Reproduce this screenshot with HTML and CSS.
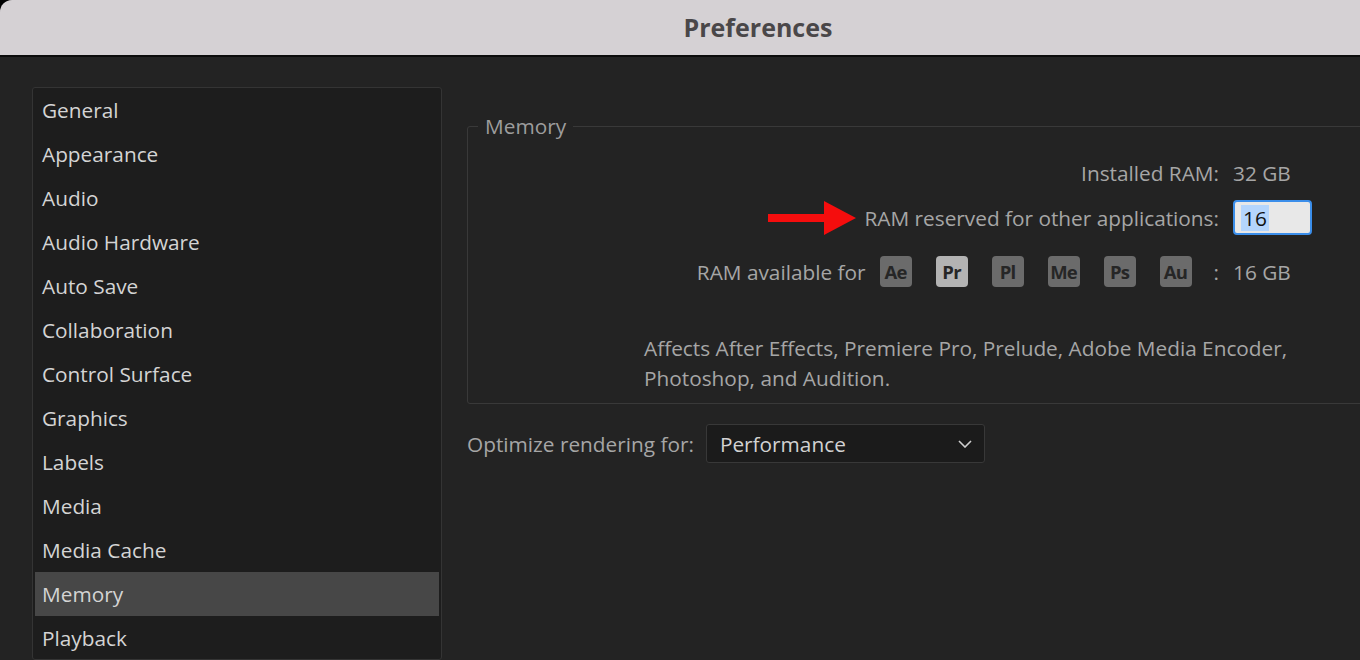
FILE: index.html
```html
<!DOCTYPE html>
<html lang="en">
<head>
    <meta charset="UTF-8">
    <title>Preferences</title>
    <link rel="stylesheet" href="styles.css">
</head>
<body>

<div class="window">
    <header class="titlebar">
        <h1>Preferences</h1>
    </header>

    <div class="main">
        <ul class="sidebar">
            <li>General</li>
            <li>Appearance</li>
            <li>Audio</li>
            <li>Audio Hardware</li>
            <li>Auto Save</li>
            <li>Collaboration</li>
            <li>Control Surface</li>
            <li>Graphics</li>
            <li>Labels</li>
            <li>Media</li>
            <li>Media Cache</li>
            <li class="active">Memory</li>
            <li>Playback</li>
        </ul>

        <div class="content">
            <fieldset class="group">
                <legend>Memory</legend>

                <div class="row">
                    <span class="label">Installed RAM:</span>
                    <span class="value">32 GB</span>
                </div>

                <div class="row">
                    <svg class="arrow" width="90" height="34" viewBox="0 0 90 34">
                        <path d="M0 13 H56 V0 L88 17 L56 34 V21 H0 Z" fill="#f50d0d"/>
                    </svg>
                    <span class="label">RAM reserved for other applications:</span>
                    <span class="value"><span class="input"><span class="selected">16</span></span></span>
                </div>

                <div class="row apps-row">
                    <span class="label">RAM available for</span>
                    <span class="apps">
                        <span class="app">Ae</span>
                        <span class="app current">Pr</span>
                        <span class="app">Pl</span>
                        <span class="app">Me</span>
                        <span class="app">Ps</span>
                        <span class="app">Au</span>
                    </span>
                    <span class="colon">:</span>
                    <span class="value">16 GB</span>
                </div>

                <p class="note">Affects After Effects, Premiere Pro, Prelude, Adobe Media Encoder,<br>Photoshop, and Audition.</p>
            </fieldset>

            <div class="render-row">
                <span>Optimize rendering for:</span>
                <div class="select">
                    <span>Performance</span>
                    <svg width="14" height="8" viewBox="0 0 14 8">
                        <path d="M1 1 L7 7 L13 1" fill="none" stroke="#cfcfcf" stroke-width="1.6"/>
                    </svg>
                </div>
            </div>
        </div>
    </div>
</div>

</body>
</html>
```

FILE: styles.css
```css
* {
    margin: 0;
    padding: 0;
    box-sizing: border-box;
}
html, body {
    height: 100%;
    background-color: #000;
    overflow: hidden;
}
body {
    font-family: 'Open Sans', 'Noto Sans', sans-serif;
    font-size: 20.8px;
    color: #a6a6a6;
}
.window {
    height: 100%;
    display: flex;
    flex-direction: column;
    background-color: #232323;
    border-top-left-radius: 12px;
    overflow: hidden;
}
.titlebar {
    height: 57px;
    flex-shrink: 0;
    background-color: #d5d1d4;
    border-bottom: 2px solid #0c0c0c;
    display: flex;
    justify-content: center;
    align-items: center;
}
.titlebar h1 {
    font-size: 25px;
    font-weight: 700;
    color: #4a4749;
    margin-left: 156px;
    margin-top: -2px;
}
.main {
    flex: 1;
    display: flex;
    padding: 30px 0 0 32px;
    gap: 25px;
    overflow: hidden;
}
.sidebar {
    list-style: none;
    width: 410px;
    flex-shrink: 0;
    background-color: #1d1d1d;
    border: 1px solid #343434;
    border-radius: 3px;
    padding: 0 2px;
}
.sidebar li {
    height: 44px;
    line-height: 44px;
    padding-left: 7px;
    color: #d4d4d4;
}
.sidebar li.active {
    background-color: #474747;
}
.content {
    width: 920px;
    flex-shrink: 0;
    padding-top: 26px;
}
.group {
    border: 1px solid #393939;
    border-radius: 3px;
    padding: 11px 95px 0 0;
    height: 291px;
}
.group legend {
    margin-left: 10px;
    padding: 0 7px;
    color: #9d9d9d;
    line-height: 26px;
}
.row {
    display: flex;
    justify-content: flex-end;
    align-items: center;
    height: 45px;
}
.label {
    margin-right: 14px;
    white-space: nowrap;
}
.value {
    width: 58px;
    flex-shrink: 0;
    display: flex;
    white-space: nowrap;
}
.arrow {
    margin-right: 6px;
}
.input {
    width: 79px;
    height: 35px;
    flex-shrink: 0;
    margin-right: -21px;
    background-color: #e8e8e8;
    border: 2px solid #3b8eea;
    border-radius: 4px;
    padding: 3px 0 0 6px;
    display: flex;
    align-items: flex-start;
}
.selected {
    background-color: #b4d5fd;
    color: #111;
    line-height: 26px;
    padding: 0 2px;
}
.apps-row {
    height: 63px;
}
.apps {
    display: flex;
    gap: 24px;
    margin-right: 22px;
}
.app {
    width: 32px;
    height: 31px;
    border-radius: 4px;
    background-color: #6b6b6b;
    color: #262626;
    font-size: 18.5px;
    font-weight: 700;
    display: flex;
    align-items: center;
    justify-content: center;
    letter-spacing: -0.8px;
}
.app.current {
    background-color: #b3b3b3;
}
.colon {
    margin-right: 14px;
}
.note {
    margin: 30px 0 0 176px;
    line-height: 30px;
}
.render-row {
    display: flex;
    align-items: center;
    gap: 12px;
    margin-top: 20px;
}
.select {
    width: 279px;
    height: 39px;
    background-color: #1b1b1b;
    border: 1px solid #383838;
    border-radius: 3px;
    display: flex;
    align-items: center;
    justify-content: space-between;
    padding: 0 12px 0 13px;
    color: #d2d2d2;
}
```
